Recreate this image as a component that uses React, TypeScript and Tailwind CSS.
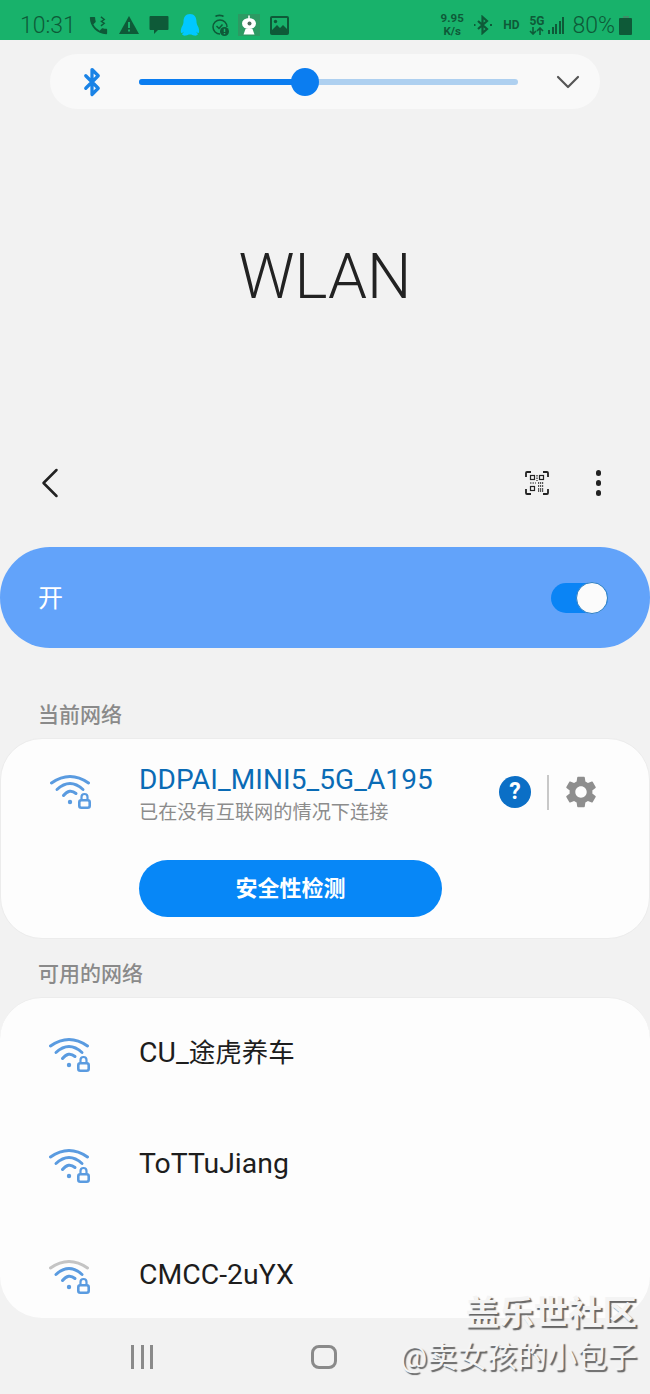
import type { ReactNode } from "react"
import { Bluetooth, ChevronDown, ChevronLeft } from "lucide-react"
import { MdSettings } from "react-icons/md"

const cjk = "font-['Roboto','Noto_Sans_CJK_SC',sans-serif]"

const WifiLock = ({ weak = false }: { weak?: boolean }) => (
    <svg width="44" height="36" viewBox="0 0 44 36" fill="none" className="shrink-0">
        <path d="M3.5 10Q22 -3 40.5 10" stroke={weak ? "#c4c4c4" : "#5a9be0"} strokeWidth="3" strokeLinecap="round" />
        <path d="M9 16.5Q22 4.5 35 16.5" stroke="#5a9be0" strokeWidth="3" strokeLinecap="round" />
        <path d="M15.5 22.5Q21.5 15 28 20.5" stroke="#5a9be0" strokeWidth="3" strokeLinecap="round" />
        <circle cx="22" cy="29" r="2.2" fill="#5a9be0" />
        <rect x="31.3" y="27.3" width="10.4" height="7.4" rx="2" stroke="#5a9be0" strokeWidth="2.6" />
        <path d="M33.5 27v-3a3 3 0 0 1 6 0v3" stroke="#5a9be0" strokeWidth="2.2" />
    </svg>
)

const QrIcon = () => (
    <svg width="24" height="24" viewBox="0 0 24 24" fill="none" stroke="#222" strokeWidth="1.8">
        <path d="M1 6V2a1 1 0 0 1 1-1h4M18 1h4a1 1 0 0 1 1 1v4M23 18v4a1 1 0 0 1-1 1h-4M6 23H2a1 1 0 0 1-1-1v-4" />
        <rect x="5.5" y="4.5" width="4" height="4" strokeWidth="1.2" />
        <rect x="14.5" y="4.5" width="4" height="4" strokeWidth="1.2" />
        <rect x="5.5" y="15.5" width="4" height="4" strokeWidth="1.2" />
        <path d="M12 4v6M5 12h6" strokeWidth="1.2" strokeDasharray="1.5 1" />
        <path d="M13 12h6M13 15h6M13 18h6M13 20h6" strokeWidth="1.4" strokeDasharray="1.2 0.8" />
    </svg>
)

const StatusIcons = () => (
    <div className="flex items-center">
        {/* call */}
        <svg width="23" height="23" viewBox="0 0 24 24" fill="#0e5a38" className="ml-[11px]">
            <path d="M6.62 10.79c1.44 2.83 3.76 5.14 6.59 6.59l2.2-2.2c.27-.27.67-.36 1.02-.24 1.12.37 2.33.57 3.57.57.55 0 1 .45 1 1V20c0 .55-.45 1-1 1-9.39 0-17-7.61-17-17 0-.55.45-1 1-1h3.5c.55 0 1 .45 1 1 0 1.25.2 2.45.57 3.57.11.35.03.74-.25 1.02l-2.2 2.2z" />
            <path d="M14.5 3l3.5 2.7-3 2 3 2-3.500 2.700M14.5 7h.1" stroke="#0e5a38" strokeWidth="1.4" fill="none" />
        </svg>
        {/* alert */}
        <svg width="20" height="18" viewBox="0 0 20 18" className="ml-[9px]">
            <path d="M10 0 20 18H0Z" fill="#0e5a38" />
            <rect x="9" y="6" width="2" height="6" fill="#18b26b" />
            <rect x="9" y="13.5" width="2" height="2" fill="#18b26b" />
        </svg>
        {/* message */}
        <svg width="20" height="20" viewBox="0 0 20 20" fill="#0e5a38" className="ml-[10px]">
            <path d="M1.5 1h17a1 1 0 0 1 1 1v12a1 1 0 0 1-1 1H9l-4 4v-4H1.5a1 1 0 0 1-1-1V2a1 1 0 0 1 1-1Z" />
        </svg>
        {/* qq */}
        <svg width="20" height="22" viewBox="0 0 20 22" fill="#00c8ff" className="ml-[11px]">
            <path d="M10 0c4.5 0 6.5 3.5 6.5 7.5 0 2 .5 3 1.5 5 1.5 3 1.5 6 .5 6.5-.8.4-1.5-1-2-1.500 0 1 .5 2 1.500 2.500 0 1-2 2-4 1.500-1.500-.3-2-1-4-1s-2.500.7-4 1c-2 .5-4-.5-4-1.500 1-.5 1.500-1.500 1.500-2.500-.5.5-1.200 1.900-2 1.500-1-.5-1-3.500.5-6.500 1-2 1.500-3 1.500-5C3.500 3.500 5.500 0 10 0Z" />
        </svg>
        {/* timer */}
        <svg width="18" height="22" viewBox="0 0 18 22" fill="none" stroke="#0e5a38" strokeWidth="1.5" className="ml-[11px]">
            <path d="M4.5 2.5c1-1.500 7-1.500 8 0" strokeWidth="1.8" />
            <path d="M9 20a7 7 0 1 1 7-7" />
            <path d="m5.5 12 2.500 2.500 3.500-4" />
            <circle cx="13.5" cy="17.5" r="4.5" fill="#0e5a38" stroke="none" />
            <path d="M13.5 14.8v3.200M13.5 19v1.200" stroke="#18b26b" />
        </svg>
        {/* robot app */}
        <div className="ml-[9px] flex h-[22px] w-[22px] items-center justify-center bg-[#2c9a63]">
            <svg width="18" height="20" viewBox="0 0 18 20" fill="#fff">
                <path d="M9 .5v3" stroke="#fff" strokeWidth="1.5" />
                <ellipse cx="9" cy="8.5" rx="7" ry="5.5" />
                <path d="M5.5 14h7l2 5.500h-11Z" />
                <circle cx="9.5" cy="8.5" r="2" fill="#4d6b5d" />
            </svg>
        </div>
        {/* image */}
        <svg width="19" height="19" viewBox="0 0 19 19" className="ml-[10px]">
            <rect width="19" height="19" rx="2" fill="#0e5a38" />
            <rect x="2" y="2" width="15" height="13" fill="#18b26b" />
            <path d="M2 14l5-5 3 3 3-3 4 4v4H2Z" fill="#0e5a38" />
            <circle cx="5.5" cy="5.5" r="1.7" fill="#0e5a38" />
        </svg>
    </div>
)

const StatusRight = () => (
    <div className="flex items-center text-[#0e5a38]">
        <div className="flex w-[26px] flex-col items-center text-[11.5px] font-bold leading-[13px] font-['Roboto',sans-serif]">
            <span>9.95</span>
            <span>K/s</span>
        </div>
        <svg width="18" height="20" viewBox="0 0 18 20" fill="none" stroke="#0e5a38" strokeWidth="2.2" className="ml-[9px]">
            <path d="M4 6l9 8-4.500 4V2L13 6l-9 8" />
            <path d="M0 10h1.500M16 10h2" />
        </svg>
        <span className="ml-[11px] text-[12px] font-bold font-['Roboto',sans-serif]">HD</span>
        <div className="ml-[10px] flex w-[15px] flex-col items-center text-[12px] font-bold leading-[11px] font-['Roboto',sans-serif]">
            <span>5G</span>
            <svg width="15" height="8" viewBox="0 0 15 8" fill="none" stroke="#0e5a38" strokeWidth="1.6">
                <path d="M4 0v7M1 4l3 3 3-3M11 8V1M8 4l3-3 3 3" />
            </svg>
        </div>
        <div className="ml-[4px] flex h-[17px] items-end gap-[1.5px]">
            <div className="h-[4px] w-[2px] bg-[#0e5a38]" />
            <div className="h-[7px] w-[2px] bg-[#0e5a38]" />
            <div className="h-[10px] w-[2px] bg-[#0e5a38]" />
            <div className="h-[13px] w-[2px] bg-[#0e5a38]" />
            <div className="h-[17px] w-[2px] bg-[#0e5a38]" />
        </div>
        <span className="ml-[8px] text-[23px] leading-none font-light font-['Roboto',sans-serif]">80%</span>
        <div className="ml-[4px] flex flex-col items-center">
            <div className="h-[2px] w-[6px] bg-[#3f8f69]" />
            <div className="h-[17px] w-[13px] rounded-[1px] bg-[#0e5a38]" />
        </div>
    </div>
)

const NetworkRow = ({ children, weak }: { children: ReactNode; weak?: boolean }) => (
    <div className="flex h-[111px] items-center pl-[47px]">
        <WifiLock weak={weak} />
        <span className="ml-[48px] text-[28.4px] text-[#1d1d1d]">{children}</span>
    </div>
)

export default function App() {
    return (
        <div className={`relative h-[1394px] w-[650px] overflow-hidden bg-[#f2f2f2] ${cjk}`}>
            {/* status bar */}
            <div className="flex h-10 items-center justify-between bg-[#18b26b] pl-[20px] pr-[18px] pt-[10px]">
                <div className="flex items-center">
                    <span className="mt-[3px] text-[23px] font-light text-[#0e5a38]">10:31</span>
                    <StatusIcons />
                </div>
                <StatusRight />
            </div>

            {/* bluetooth volume */}
            <div className="mx-[50px] mt-[14px] flex h-[55px] items-center rounded-[28px] bg-[#f9f9f9] pl-[27px]">
                <Bluetooth size={30} strokeWidth={2.6} className="shrink-0 text-[#1a83e6]" />
                <div className="relative ml-[32px] flex h-[6px] w-[379px] shrink-0 items-center rounded-full bg-[#aed0f0]">
                    <div className="h-[6px] w-[166px] rounded-full bg-[#0b7df0]" />
                    <div className="absolute left-[152px] h-[28px] w-[28px] rounded-full bg-[#0b7df0]" />
                </div>
                <ChevronDown size={40} strokeWidth={1.3} className="ml-[30px] shrink-0 text-[#555]" />
            </div>

            {/* title */}
            <div className="mt-[128px] flex h-[80px] items-center justify-center text-[62.5px] font-light text-[#222]">
                WLAN
            </div>

            {/* toolbar */}
            <div className="mt-[146px] flex h-[40px] items-center pl-[24px] pr-[49px]">
                <ChevronLeft size={52} strokeWidth={1.15} className="text-[#222]" />
                <div className="ml-auto">
                    <QrIcon />
                </div>
                <div className="ml-[47px] flex flex-col gap-[4.5px]">
                    <div className="h-[5.5px] w-[5.5px] rounded-full bg-[#222]" />
                    <div className="h-[5.5px] w-[5.5px] rounded-full bg-[#222]" />
                    <div className="h-[5.5px] w-[5.5px] rounded-full bg-[#222]" />
                </div>
            </div>

            {/* switch */}
            <div className="mt-[44px] flex h-[101px] items-center justify-between rounded-[50px] bg-[#62a3fa] pl-[38px] pr-[42px]">
                <span className="mt-[2px] text-[25px] text-white">开</span>
                <div className="flex h-[30px] w-[57px] items-center justify-end rounded-full bg-[#0a84f5]">
                    <div className="h-[32px] w-[32px] rounded-full border border-[#2e7fc4] bg-[#fbfbfb]" />
                </div>
            </div>

            {/* current network */}
            <div className="ml-[38px] mt-[53px] text-[21px] font-medium leading-[28px] text-[#8a8a8a]">当前网络</div>
            <div className="mt-[9px] h-[201px] rounded-[42px] border border-[#ececec] bg-[#fdfdfd]">
                <div className="flex pl-[47px] pr-[49px] pt-[26px]">
                    <div className="pt-[8px]">
                        <WifiLock />
                    </div>
                    <div className="ml-[47px] flex flex-col">
                        <span className="text-[28px] leading-[30px] tracking-[0.1px] text-[#0a6bb5]">DDPAI_MINI5_5G_A195</span>
                        <span className="mt-[5px] text-[19.2px] leading-[25px] text-[#8c8c8c]">已在没有互联网的情况下连接</span>
                    </div>
                    <div className="ml-auto flex items-center self-start pt-[8px]">
                        <div className="flex h-[32px] w-[32px] items-center justify-center rounded-full bg-[#0b6fc6] text-[23px] font-bold text-white">?</div>
                        <div className="ml-[16px] h-[35px] w-[2px] bg-[#c8c8c8]" />
                        <MdSettings size={38} color="#8e8e8e" className="ml-[13px]" />
                    </div>
                </div>
                <div className="ml-[138px] mt-[35px] flex h-[57px] w-[303px] items-center justify-center rounded-[29px] bg-[#0787f7] text-[22px] font-bold text-white">
                    安全性检测
                </div>
            </div>

            {/* available networks */}
            <div className="ml-[38px] mt-[21px] text-[21px] font-medium leading-[28px] text-[#8a8a8a]">可用的网络</div>
            <div className="mt-[9px] h-[321px] overflow-hidden rounded-[42px] border-t border-[#ececec] bg-[#fdfdfd]">
                <NetworkRow>
                    CU_<span className="text-[26.5px]">途虎养车</span>
                </NetworkRow>
                <NetworkRow>ToTTuJiang</NetworkRow>
                <NetworkRow weak>CMCC-2uYX</NetworkRow>
            </div>

            {/* nav */}
            <div className="mt-[21px] flex h-[36px] items-center">
                <div className="ml-[131px] flex gap-[6.5px]">
                    <div className="h-[24px] w-[3px] bg-[#8a8a8a]" />
                    <div className="h-[24px] w-[3px] bg-[#8a8a8a]" />
                    <div className="h-[24px] w-[3px] bg-[#8a8a8a]" />
                </div>
                <div className="ml-[158px] h-[24px] w-[26px] rounded-[8px] border-[3px] border-[#8a8a8a]" />
            </div>

            {/* watermark */}
            <div className="absolute right-[13px] top-[1292px] flex flex-col items-end text-[#f4f4f4] [text-shadow:2px_2px_1px_#666]">
                <span className="text-[34.4px] font-bold leading-[42px]">盖乐世社区</span>
                <span className="mt-[3px] text-[30px] leading-[40px]">@卖女孩的小包子</span>
            </div>
        </div>
    )
}
